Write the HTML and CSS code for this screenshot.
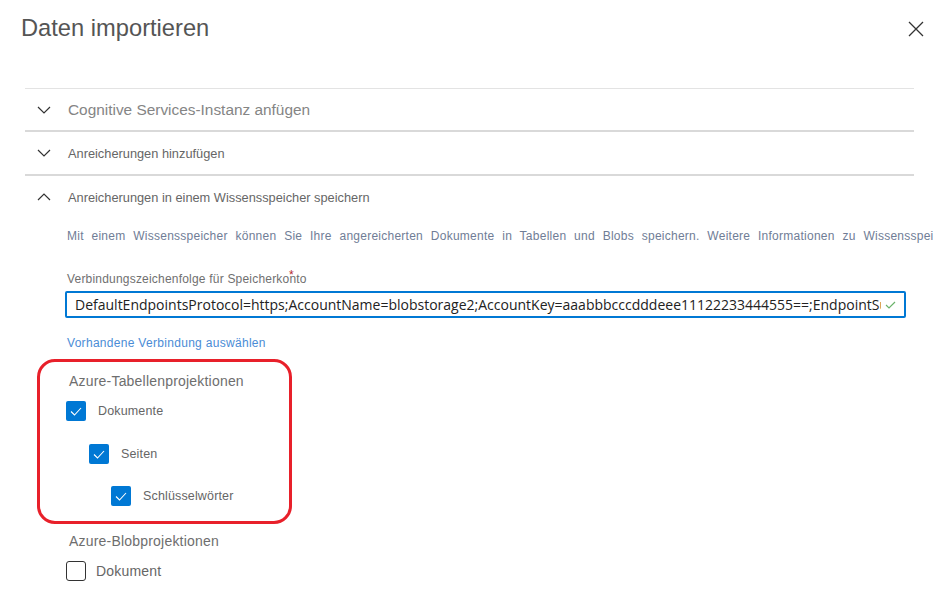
FILE: index.html
```
<!DOCTYPE html>
<html lang="de">
<head>
<meta charset="utf-8">
<title>Daten importieren</title>
<link rel="stylesheet" href="styles.css">
</head>
<body>
<div class="page">
  <header class="header">
    <h1 class="title">Daten importieren</h1>
    <button class="close" aria-label="Schließen">
      <svg width="16" height="16" viewBox="0 0 16 16"><path d="M1 1 L15 15 M15 1 L1 15" stroke="#333" stroke-width="1.3" fill="none"/></svg>
    </button>
  </header>

  <div class="panel">
    <section class="sec sec-first">
      <div class="sec-head big">
        <svg class="chev" width="14" height="8" viewBox="0 0 14 8"><path d="M1 1 L7 7 L13 1" stroke="#333" stroke-width="1.2" fill="none"/></svg>
        <span>Cognitive Services-Instanz anfügen</span>
      </div>
    </section>
    <section class="sec">
      <div class="sec-head">
        <svg class="chev" width="14" height="8" viewBox="0 0 14 8"><path d="M1 1 L7 7 L13 1" stroke="#333" stroke-width="1.2" fill="none"/></svg>
        <span>Anreicherungen hinzufügen</span>
      </div>
    </section>
    <section class="sec">
      <div class="sec-head">
        <svg class="chev" width="14" height="8" viewBox="0 0 14 8"><path d="M1 7 L7 1 L13 7" stroke="#333" stroke-width="1.2" fill="none"/></svg>
        <span>Anreicherungen in einem Wissensspeicher speichern</span>
      </div>
      <div class="sec-body">
        <p class="desc">Mit einem Wissensspeicher können Sie Ihre angereicherten Dokumente in Tabellen und Blobs speichern. Weitere Informationen zu Wissensspeichern</p>
        <label class="field-label"><span class="req-wrap">Verbindungszeichenfolge für Speicherkonto<span class="req">*</span></span></label>
        <div class="input">
          <span class="input-text">DefaultEndpointsProtocol=https;AccountName=blobstorage2;AccountKey=aaabbbcccdddeee11122233444555==;EndpointSuffix=core.windows.net</span>
          <svg class="ok" width="11" height="8" viewBox="0 0 11 8"><path d="M1 4 L4 7 L10 1" stroke="#6bb36b" stroke-width="1.2" fill="none"/></svg>
        </div>
        <a class="link" href="#">Vorhandene Verbindung auswählen</a>

        <div class="highlight">
          <div class="group-title">Azure-Tabellenprojektionen</div>
          <div class="cb-row lvl0">
            <span class="cb checked"><svg width="12" height="9" viewBox="0 0 12 9"><path d="M1 4.5 L4.5 8 L11 1" stroke="#fff" stroke-width="1.1" fill="none"/></svg></span>
            <span class="cb-label">Dokumente</span>
          </div>
          <div class="cb-row lvl1">
            <span class="cb checked"><svg width="12" height="9" viewBox="0 0 12 9"><path d="M1 4.5 L4.5 8 L11 1" stroke="#fff" stroke-width="1.1" fill="none"/></svg></span>
            <span class="cb-label">Seiten</span>
          </div>
          <div class="cb-row lvl2">
            <span class="cb checked"><svg width="12" height="9" viewBox="0 0 12 9"><path d="M1 4.5 L4.5 8 L11 1" stroke="#fff" stroke-width="1.1" fill="none"/></svg></span>
            <span class="cb-label">Schlüsselwörter</span>
          </div>
        </div>

        <div class="group-title blob">Azure-Blobprojektionen</div>
        <div class="cb-row blob-row">
          <span class="cb empty"></span>
          <span class="cb-label big">Dokument</span>
        </div>
      </div>
    </section>
  </div>
</div>
</body>
</html>
```

FILE: styles.css
```
html, body {
  margin: 0;
  padding: 0;
  background: #fff;
  overflow: hidden;
}
body {
  width: 933px;
  height: 610px;
  font-family: "Liberation Sans", Arial, sans-serif;
  color: #333;
}
.page {
  width: 933px;
}
.header {
  height: 88px;
  display: flex;
  justify-content: space-between;
  align-items: flex-start;
  padding: 0 9px 0 21px;
  box-sizing: border-box;
}
.title {
  margin: 14px 0 0 0;
  font-size: 23.7px;
  line-height: 28px;
  font-weight: normal;
  color: #555;
}
.close {
  margin-top: 21px;
  border: 0;
  background: none;
  padding: 0;
  width: 16px;
  height: 16px;
}
.panel {
  margin-left: 25px;
  width: 889px;
}
.sec {
  border-top: 2px solid #d9d9d9;
}
.sec-first {
  border-top: 1px solid #e3e3e3;
}
.sec-head {
  height: 42px;
  display: flex;
  align-items: center;
  padding-left: 12px;
  font-size: 12.8px;
  color: #666;
}
.sec-head.big {
  height: 41px;
  font-size: 15.4px;
  color: #858585;
}
.chev {
  margin-right: 17px;
}
.sec-body {
  padding-left: 42px;
}
.desc {
  margin: 8px 0 0 0;
  font-size: 12px;
  line-height: 20px;
  color: #707d96;
  white-space: nowrap;
  word-spacing: 4.2px;
  letter-spacing: 0.25px;
}
.field-label {
  display: block;
  margin-top: 25px;
  font-size: 12px;
  line-height: 16px;
  letter-spacing: 0.2px;
  color: #707070;
}
.req-wrap {
  position: relative;
}
.req {
  position: absolute;
  left: 222px;
  top: -5px;
  color: #b3262c;
  font-size: 12px;
}
.input {
  margin-top: 4px;
  margin-left: -2px;
  width: 841px;
  height: 27px;
  box-sizing: border-box;
  border: 2px solid #0078d4;
  border-radius: 2px;
  display: flex;
  align-items: center;
  padding: 0 8px 0 8px;
}
.input-text {
  flex: 1;
  overflow: hidden;
  white-space: nowrap;
  font-family: "Open Sans", sans-serif;
  font-size: 14px;
  color: #222;
}
.ok {
  margin-left: 4px;
  flex: none;
}
.link {
  display: block;
  margin-top: 17px;
  font-size: 12px;
  line-height: 16px;
  letter-spacing: 0.3px;
  color: #4a8cd6;
  text-decoration: none;
}
.highlight {
  margin: 8px 0 0 -30px;
  width: 255px;
  height: 165px;
  box-sizing: border-box;
  border: 3px solid #e8202a;
  border-radius: 18px;
  padding: 10px 0 0 26px;
}
.group-title {
  margin-left: 3px;
  font-size: 14px;
  line-height: 18px;
  letter-spacing: 0.2px;
  color: #6e6e6e;
}
.cb-row {
  display: flex;
  align-items: center;
  margin-top: 11px;
  height: 20px;
}
.lvl1 {
  margin-top: 23px;
  margin-left: 23px;
}
.lvl2 {
  margin-top: 22px;
  margin-left: 45px;
}
.cb {
  width: 20px;
  height: 20px;
  box-sizing: border-box;
  border-radius: 2px;
  display: flex;
  align-items: center;
  justify-content: center;
  flex: none;
}
.cb.checked {
  background: #0078d4;
}
.cb.empty {
  border: 1.5px solid #333;
  border-radius: 3px;
}
.cb-label {
  margin-left: 12px;
  font-size: 12.5px;
  letter-spacing: 0.15px;
  color: #666;
}
.cb-label.big {
  margin-left: 10px;
  font-size: 14px;
  letter-spacing: 0.2px;
}
.group-title.blob {
  margin-top: 8px;
}
.blob-row {
  margin-left: -1px;
}
.sec-body > .group-title.blob {
  margin-left: 2px;
}
```
